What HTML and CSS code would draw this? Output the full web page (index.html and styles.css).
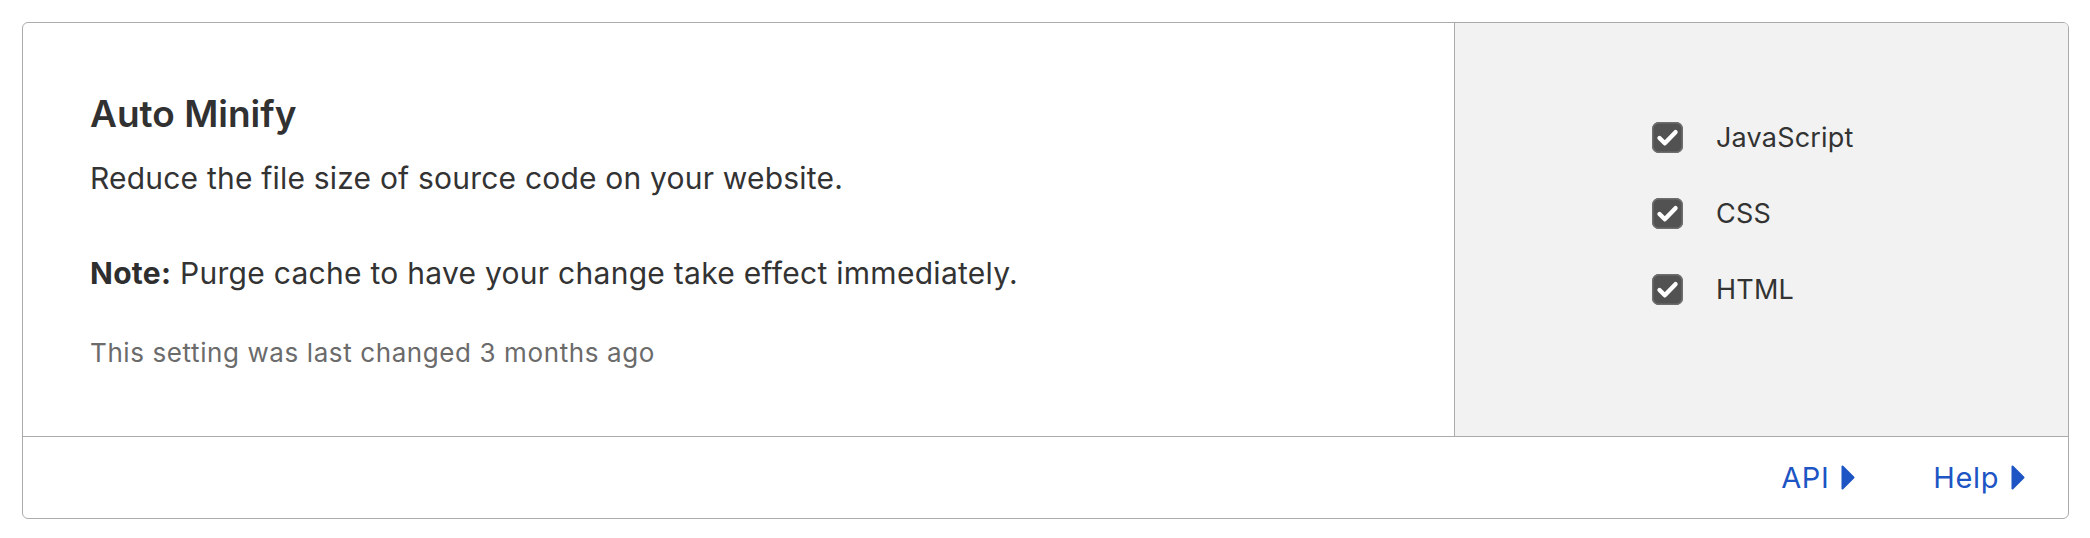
FILE: index.html
```html
<!DOCTYPE html>
<html lang="en">
<head>
<meta charset="utf-8">
<title>Auto Minify</title>
<link rel="stylesheet" href="styles.css">
</head>
<body>
<div class="card">
  <div class="card-main">
    <div class="info">
      <h2 class="title">Auto Minify</h2>
      <p class="desc">Reduce the file size of source code on your website.</p>
      <p class="note"><strong>Note:</strong> Purge cache to have your change take effect immediately.</p>
      <p class="changed">This setting was last changed 3 months ago</p>
    </div>
    <div class="control">
      <ul class="checks">
        <li class="check-row">
          <span class="box"><svg viewBox="0 0 31 31" width="31" height="31"><polyline points="7.5,16 12.8,21.3 23.5,10.2" fill="none" stroke="#fff" stroke-width="4.4" stroke-linecap="round" stroke-linejoin="round"/></svg></span>
          <span class="label">JavaScript</span>
        </li>
        <li class="check-row">
          <span class="box"><svg viewBox="0 0 31 31" width="31" height="31"><polyline points="7.5,16 12.8,21.3 23.5,10.2" fill="none" stroke="#fff" stroke-width="4.4" stroke-linecap="round" stroke-linejoin="round"/></svg></span>
          <span class="label">CSS</span>
        </li>
        <li class="check-row">
          <span class="box"><svg viewBox="0 0 31 31" width="31" height="31"><polyline points="7.5,16 12.8,21.3 23.5,10.2" fill="none" stroke="#fff" stroke-width="4.4" stroke-linecap="round" stroke-linejoin="round"/></svg></span>
          <span class="label">HTML</span>
        </li>
      </ul>
    </div>
  </div>
  <div class="card-footer">
    <a class="link" href="#">API<svg class="caret" viewBox="0 0 14 25" width="14" height="25"><path d="M1.5 1.5 L12.5 12.5 L1.5 23.5 Z" fill="currentColor" stroke="currentColor" stroke-width="2" stroke-linejoin="round"/></svg></a>
    <a class="link" href="#">Help<svg class="caret" viewBox="0 0 14 25" width="14" height="25"><path d="M1.5 1.5 L12.5 12.5 L1.5 23.5 Z" fill="currentColor" stroke="currentColor" stroke-width="2" stroke-linejoin="round"/></svg></a>
  </div>
</div>
</body>
</html>
```

FILE: styles.css
```css
* { box-sizing: border-box; }

body {
  margin: 22px 21px 0 22px;
  background: #ffffff;
  font-family: Inter, "Noto Sans", "Liberation Sans", sans-serif;
  color: #333333;
}

.card {
  border: 1px solid #ababab;
  border-radius: 6px;
  overflow: hidden;
  background: #ffffff;
}

.card-main {
  display: flex;
  border-bottom: 1px solid #ababab;
  height: 414px;
}

.info {
  flex: 0 0 1432px;
  padding: 68px 0 0 67px;
  border-right: 1px solid #ababab;
}

.title {
  margin: 0;
  font-size: 37px;
  line-height: 45px;
  font-weight: 600;
  color: #313131;
}

.desc {
  margin: 20px 0 0;
  font-size: 30px;
  line-height: 45px;
  letter-spacing: 0.2px;
  color: #333333;
}

.note {
  margin: 50px 0 0;
  font-size: 30px;
  line-height: 45px;
  letter-spacing: 0.28px;
  color: #333333;
}

.note strong { font-weight: 700; color: #2e2e2e; }

.changed {
  margin: 38px 0 0;
  font-size: 26px;
  line-height: 37.5px;
  letter-spacing: 0.6px;
  color: #6b6b6b;
}

.control {
  flex: 1;
  background: #f2f2f2;
  padding: 76px 0 0 197px;
}

.checks {
  list-style: none;
  margin: 0;
  padding: 0;
}

.check-row {
  display: flex;
  align-items: center;
  height: 76px;
}

.box {
  display: flex;
  width: 31px;
  height: 31px;
  border-radius: 7px;
  background: #525252;
  box-shadow: inset 0 0 0 1.5px #6e6e6e;
}

.label {
  margin-left: 33px;
  font-size: 27px;
  letter-spacing: 0.2px;
  color: #333333;
}

.card-footer {
  display: flex;
  justify-content: flex-end;
  align-items: center;
  gap: 78px;
  height: 81px;
  padding-right: 43px;
}

.link {
  display: flex;
  align-items: center;
  gap: 12px;
  font-size: 29px;
  letter-spacing: 0.6px;
  color: #1d55c4;
  text-decoration: none;
}

.caret { display: block; }
```
